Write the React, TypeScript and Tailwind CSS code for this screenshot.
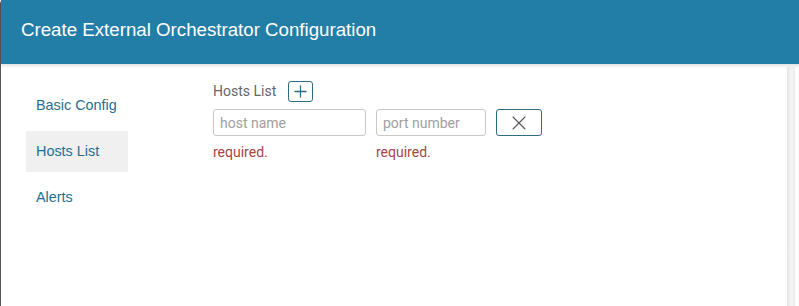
import { Plus, X } from "lucide-react";

const navItems = ["Basic Config", "Hosts List", "Alerts"];

export default function App() {
  return (
    <div className="h-[306px] w-[799px] overflow-hidden bg-white font-['Roboto',sans-serif]">
      <div className="relative flex h-full flex-col rounded-tl-[4px] border-l border-[#555]">
        <header className="relative z-10 flex h-[64px] shrink-0 items-center bg-[#237ea7] pb-[4px] pl-5 shadow-[0_2px_3px_rgba(0,0,0,0.12)]">
          <h1 className="font-['Liberation_Sans',Arial,sans-serif] text-[18.7px] font-normal text-white">
            Create External Orchestrator Configuration
          </h1>
        </header>

        <div className="flex flex-1">
          <nav className="flex w-[186px] shrink-0 flex-col gap-[5px] pl-[25px] pt-[21px] font-['Liberation_Sans',Arial,sans-serif]">
            {navItems.map((item) => (
              <div
                key={item}
                className={
                  item === "Hosts List"
                    ? "flex h-[41px] w-[102px] items-center bg-[#f0f0f0] pl-[10px] text-[14.4px] text-[#1f6f93]"
                    : "flex h-[41px] w-[102px] items-center pl-[10px] text-[14.4px] text-[#1f6f93]"
                }
              >
                {item}
              </div>
            ))}
          </nav>

          <div className="flex-1 pl-[26px] pt-[17px]">
            <div className="flex items-center gap-[12px]">
              <span className="text-[14px] text-[#666]">Hosts List</span>
              <button className="flex h-[21px] w-[25px] items-center justify-center rounded-[3px] border border-[#2b6c86] text-[#2b6c86]">
                <Plus size={19} strokeWidth={1.6} />
              </button>
            </div>

            <div className="mt-[7px] flex gap-[10px]">
              <div className="flex flex-col">
                <input
                  placeholder="host name"
                  className="h-[27px] w-[153px] rounded-[3px] border border-[#c8c8c8] px-[6px] text-[14px] text-[#333] outline-none placeholder:text-[#a0a0a0]"
                />
                <span className="mt-[6px] text-[14px] text-[#a94442]">required.</span>
              </div>
              <div className="flex flex-col">
                <input
                  placeholder="port number"
                  className="h-[27px] w-[110px] rounded-[3px] border border-[#c8c8c8] px-[6px] text-[14px] text-[#333] outline-none placeholder:text-[#a0a0a0]"
                />
                <span className="mt-[6px] text-[14px] text-[#a94442]">required.</span>
              </div>
              <button className="flex h-[27px] w-[46px] items-center justify-center rounded-[3px] border border-[#2b6c86] text-[#555]">
                <X size={24} strokeWidth={1.1} />
              </button>
            </div>
          </div>

          <div className="mr-[4px] mt-[3px] w-[8px] bg-gradient-to-r from-[#e4e4e4] via-[#f5f5f5] to-[#ececec]" />
        </div>
      </div>
    </div>
  );
}
